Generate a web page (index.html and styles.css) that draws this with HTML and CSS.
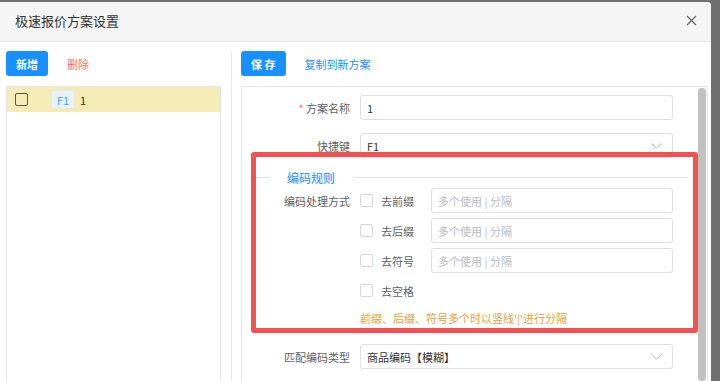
FILE: index.html
```html
<!DOCTYPE html>
<html>
  <head>
    <meta http-equiv="content-type" content="text/html; charset=utf-8" />
    <title>极速报价方案设置</title>
    <link rel="stylesheet" href="styles.css">
  </head>
  <body>
    <div class="dialog">
      <div class="dialog_head">
        <span class="dialog_title">极速报价方案设置</span>
        <svg class="close" width="11" height="11" viewBox="0 0 11 11"><path d="M1 1L10 10M10 1L1 10" stroke="#666" stroke-width="1.2" fill="none"/></svg>
      </div>
      <div class="dialog_body">
        <div class="left">
          <div class="toolbar">
            <button class="btn">新增</button>
            <span class="link_red">删除</span>
          </div>
          <div class="list">
            <div class="list_row">
              <span class="chk_dark"></span>
              <span class="tag">F1</span>
              <span class="row_name">1</span>
            </div>
          </div>
        </div>

        <div class="right">
          <div class="toolbar">
            <button class="btn">保 存</button>
            <span class="link_blue">复制到新方案</span>
          </div>
          <div class="form_box">
            <div class="form">
              <div class="form_row">
                <div class="label"><span class="star">*</span> 方案名称</div>
                <div class="input">1</div>
              </div>
              <div class="form_row">
                <div class="label">快捷键</div>
                <div class="input select">F1
                  <svg class="arrow" width="11" height="6" viewBox="0 0 11 6"><path d="M0.5 0.5L5.5 5L10.5 0.5" stroke="#b5b5b5" stroke-width="1" fill="none"/></svg>
                </div>
              </div>

              <div class="fieldset">
                <div class="legend_line short"></div>
                <span class="legend">编码规则</span>
                <div class="legend_line"></div>
              </div>

              <div class="rule_row">
                <div class="label">编码处理方式</div>
                <span class="chk"></span>
                <span class="chk_text">去前缀</span>
                <div class="input small placeholder">多个使用 | 分隔</div>
              </div>
              <div class="rule_row">
                <div class="label"></div>
                <span class="chk"></span>
                <span class="chk_text">去后缀</span>
                <div class="input small placeholder">多个使用 | 分隔</div>
              </div>
              <div class="rule_row">
                <div class="label"></div>
                <span class="chk"></span>
                <span class="chk_text">去符号</span>
                <div class="input small placeholder">多个使用 | 分隔</div>
              </div>
              <div class="rule_row">
                <div class="label"></div>
                <span class="chk"></span>
                <span class="chk_text">去空格</span>
              </div>
              <div class="hint">前缀、后缀、符号多个时以竖线'|'进行分隔</div>

              <div class="form_row">
                <div class="label">匹配编码类型</div>
                <div class="input select">商品编码【模糊】
                  <svg class="arrow" width="11" height="6" viewBox="0 0 11 6"><path d="M0.5 0.5L5.5 5L10.5 0.5" stroke="#b5b5b5" stroke-width="1" fill="none"/></svg>
                </div>
              </div>
            </div>
            <div class="scroll_track"><div class="scroll_thumb"></div></div>
            <div class="mark"></div>
          </div>
        </div>
      </div>
    </div>
  </body>
</html>
```

FILE: styles.css
```css
body, html {
  margin: 0;
  padding: 0;
  height: 100%;
  overflow: hidden;
}

body {
  background: #6f6f6f;
  font-family: "Noto Sans CJK SC", "Microsoft YaHei", sans-serif;
  font-size: 11px;
  color: #606266;
}

.dialog {
  width: 711px;
  height: 379px;
  margin: 2px 0 0 0;
  background: white;
  border-radius: 0 4px 0 0;
  overflow: hidden;
}

.dialog_head {
  height: 39px;
  background: #f5f5f5;
  border-bottom: 1px solid #e6e6e6;
  display: flex;
  align-items: center;
  justify-content: space-between;
  padding: 0 14px 0 15px;
}

.dialog_title {
  font-size: 13px;
  color: #333;
  margin: -3px 0 0 0;
}

.close {
  margin: -3px 0 0 0;
}

.dialog_body {
  display: flex;
  padding: 9px 3px 0 6px;
  height: 330px;
}

.left {
  width: 215px;
  margin: 0 10px 0 0;
  display: flex;
  flex-direction: column;
}

.right {
  flex: 1;
  border-left: 1px solid #e8e8e8;
  padding: 0 0 0 9px;
  display: flex;
  flex-direction: column;
}

.toolbar {
  height: 25px;
  display: flex;
  align-items: center;
  margin: 0 0 10px 0;
}

.btn {
  height: 25px;
  border: none;
  border-radius: 3px;
  background: #1890ff;
  color: white;
  font-family: inherit;
  font-size: 11px;
  font-weight: bold;
  padding: 0 10px;
  margin: 0 19px 0 0;
}

.link_red {
  color: #f56c6c;
}

.link_blue {
  color: #1890ff;
}

.list {
  flex: 1;
  border: 1px solid #e4e4e4;
  border-bottom: none;
}

.list_row {
  height: 25px;
  background: #f4ebb6;
  display: flex;
  align-items: center;
  padding: 0 0 0 8px;
  color: #333;
}

.chk_dark {
  width: 11px;
  height: 11px;
  border: 1.5px solid #555;
  border-radius: 2px;
  margin: 0 24px 0 0;
}

.tag {
  height: 17px;
  width: 22px;
  background: #e6f3ff;
  color: #409eff;
  display: flex;
  align-items: center;
  justify-content: center;
  margin: 0 6px 0 0;
}

.form_box {
  flex: 1;
  width: 465px;
  border: 1px solid #e4e4e4;
  border-bottom: none;
  display: flex;
  position: relative;
  overflow: hidden;
}

.form {
  flex: 1;
  padding: 8px 0 0 0;
}

.form_row {
  display: flex;
  align-items: center;
  margin: 0 0 13px 0;
}

.label {
  width: 108px;
  margin: 0 10px 0 0;
  text-align: right;
  flex-shrink: 0;
}

.star {
  color: #f56c6c;
}

.input {
  width: 313px;
  height: 25px;
  box-sizing: border-box;
  border: 1px solid #dcdfe6;
  border-radius: 3px;
  padding: 0 0 0 6px;
  display: flex;
  align-items: center;
  color: #333;
}

.select {
  justify-content: space-between;
  padding: 0 10px 0 6px;
}

.input.small {
  width: 242px;
}

.placeholder {
  color: #b8bcc4;
}

.fieldset {
  display: flex;
  align-items: center;
  height: 12px;
  margin: 0 7px 5px 8px;
}

.legend_line {
  flex: 1;
  height: 1px;
  background: #e4e4e4;
}

.legend_line.short {
  flex: none;
  width: 20px;
}

.legend {
  color: #409eff;
  font-size: 12px;
  font-weight: 500;
  padding: 0 19px 0 17px;
}

.rule_row {
  display: flex;
  align-items: center;
  height: 25px;
  margin: 0 0 5px 0;
}

.chk {
  width: 11px;
  height: 11px;
  border: 1px solid #d4d7de;
  border-radius: 2px;
  margin: 0 8px 0 0;
}

.chk_text {
  width: 50px;
}

.hint {
  color: #e3a13d;
  height: 20px;
  line-height: 20px;
  margin: 0 0 16px 118px;
}

.scroll_track {
  width: 8px;
  padding: 1px 1px 0 3px;
}

.scroll_thumb {
  height: 100%;
  background: #c1c1c1;
  border-radius: 4px;
}

/* red outline drawn over the rule block */
.mark {
  position: absolute;
  left: 9px;
  top: 65px;
  width: 437px;
  height: 171px;
  border: 5px solid #f25252;
  border-radius: 3px;
}
```
